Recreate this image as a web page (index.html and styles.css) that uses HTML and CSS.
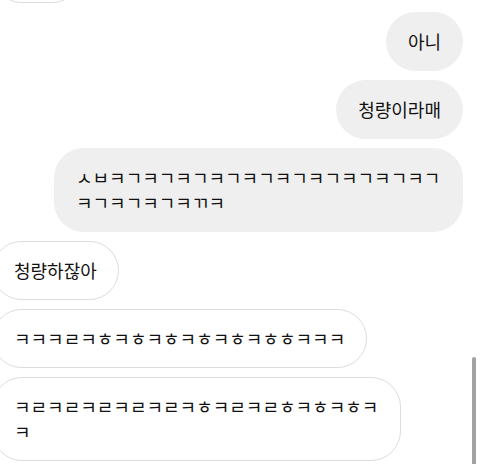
FILE: index.html
```html
<!DOCTYPE html>
<html lang="ko">
<head>
  <meta charset="UTF-8" />
  <meta name="viewport" content="width=device-width, initial-scale=1.0"/>
  <title>채팅</title>
  <link rel="stylesheet" href="styles.css">
</head>
<body>

  <div class="chat">
    <!-- 위로 잘린 말풍선 -->
    <div class="bubble received stub"></div>

    <div class="bubble sent">아니</div>
    <div class="bubble sent">청량이라매</div>
    <div class="bubble sent">ㅅㅂㅋㄱㅋㄱㅋㄱㅋㄱㅋㄱㅋㄱㅋㄱㅋㄱㅋㄱㅋㄱㅋㄱㅋㄱㅋㄱㅋㄲㅋ</div>

    <div class="bubble received">청량하잖아</div>
    <div class="bubble received">ㅋㅋㅋㄹㅋㅎㅋㅎㅋㅎㅋㅎㅋㅎㅋㅎㅎㅋㅋㅋ</div>
    <div class="bubble received">ㅋㄹㅋㄹㅋㄹㅋㄹㅋㄹㅋㅎㅋㄹㅋㄹㅎㅋㅎㅋㅎㅋㅋ</div>
  </div>

  <div class="scroll-thumb"></div>

</body>
</html>
```

FILE: styles.css
```css
* {
  box-sizing: border-box;
  margin: 0;
  padding: 0;
}

body {
  width: 480px;
  height: 464px;
  background: #ffffff;
  font-family: 'Noto Sans CJK KR', 'Noto Sans', sans-serif;
  color: #111111;
  overflow: hidden;
  position: relative;
}

.chat {
  display: flex;
  flex-direction: column;
  gap: 9px;
  margin-top: -56px;
  padding-right: 17px;
}

.bubble {
  font-size: 18px;
  line-height: 25px;
  padding: 17px 22px;
  border-radius: 30px;
  max-width: 409px;
  word-break: break-all;
}

.sent {
  align-self: flex-end;
  background: #efefef;
}

.received {
  align-self: flex-start;
  margin-left: -8px;
  background: #ffffff;
  border: 1px solid #dcdcdc;
  padding: 16px 21px;
}

.stub {
  width: 90px;
  height: 59px;
}

.scroll-thumb {
  position: absolute;
  left: 472px;
  top: 357px;
  width: 4px;
  height: 110px;
  border-radius: 2px;
  background: #a3a3a3;
}
```
